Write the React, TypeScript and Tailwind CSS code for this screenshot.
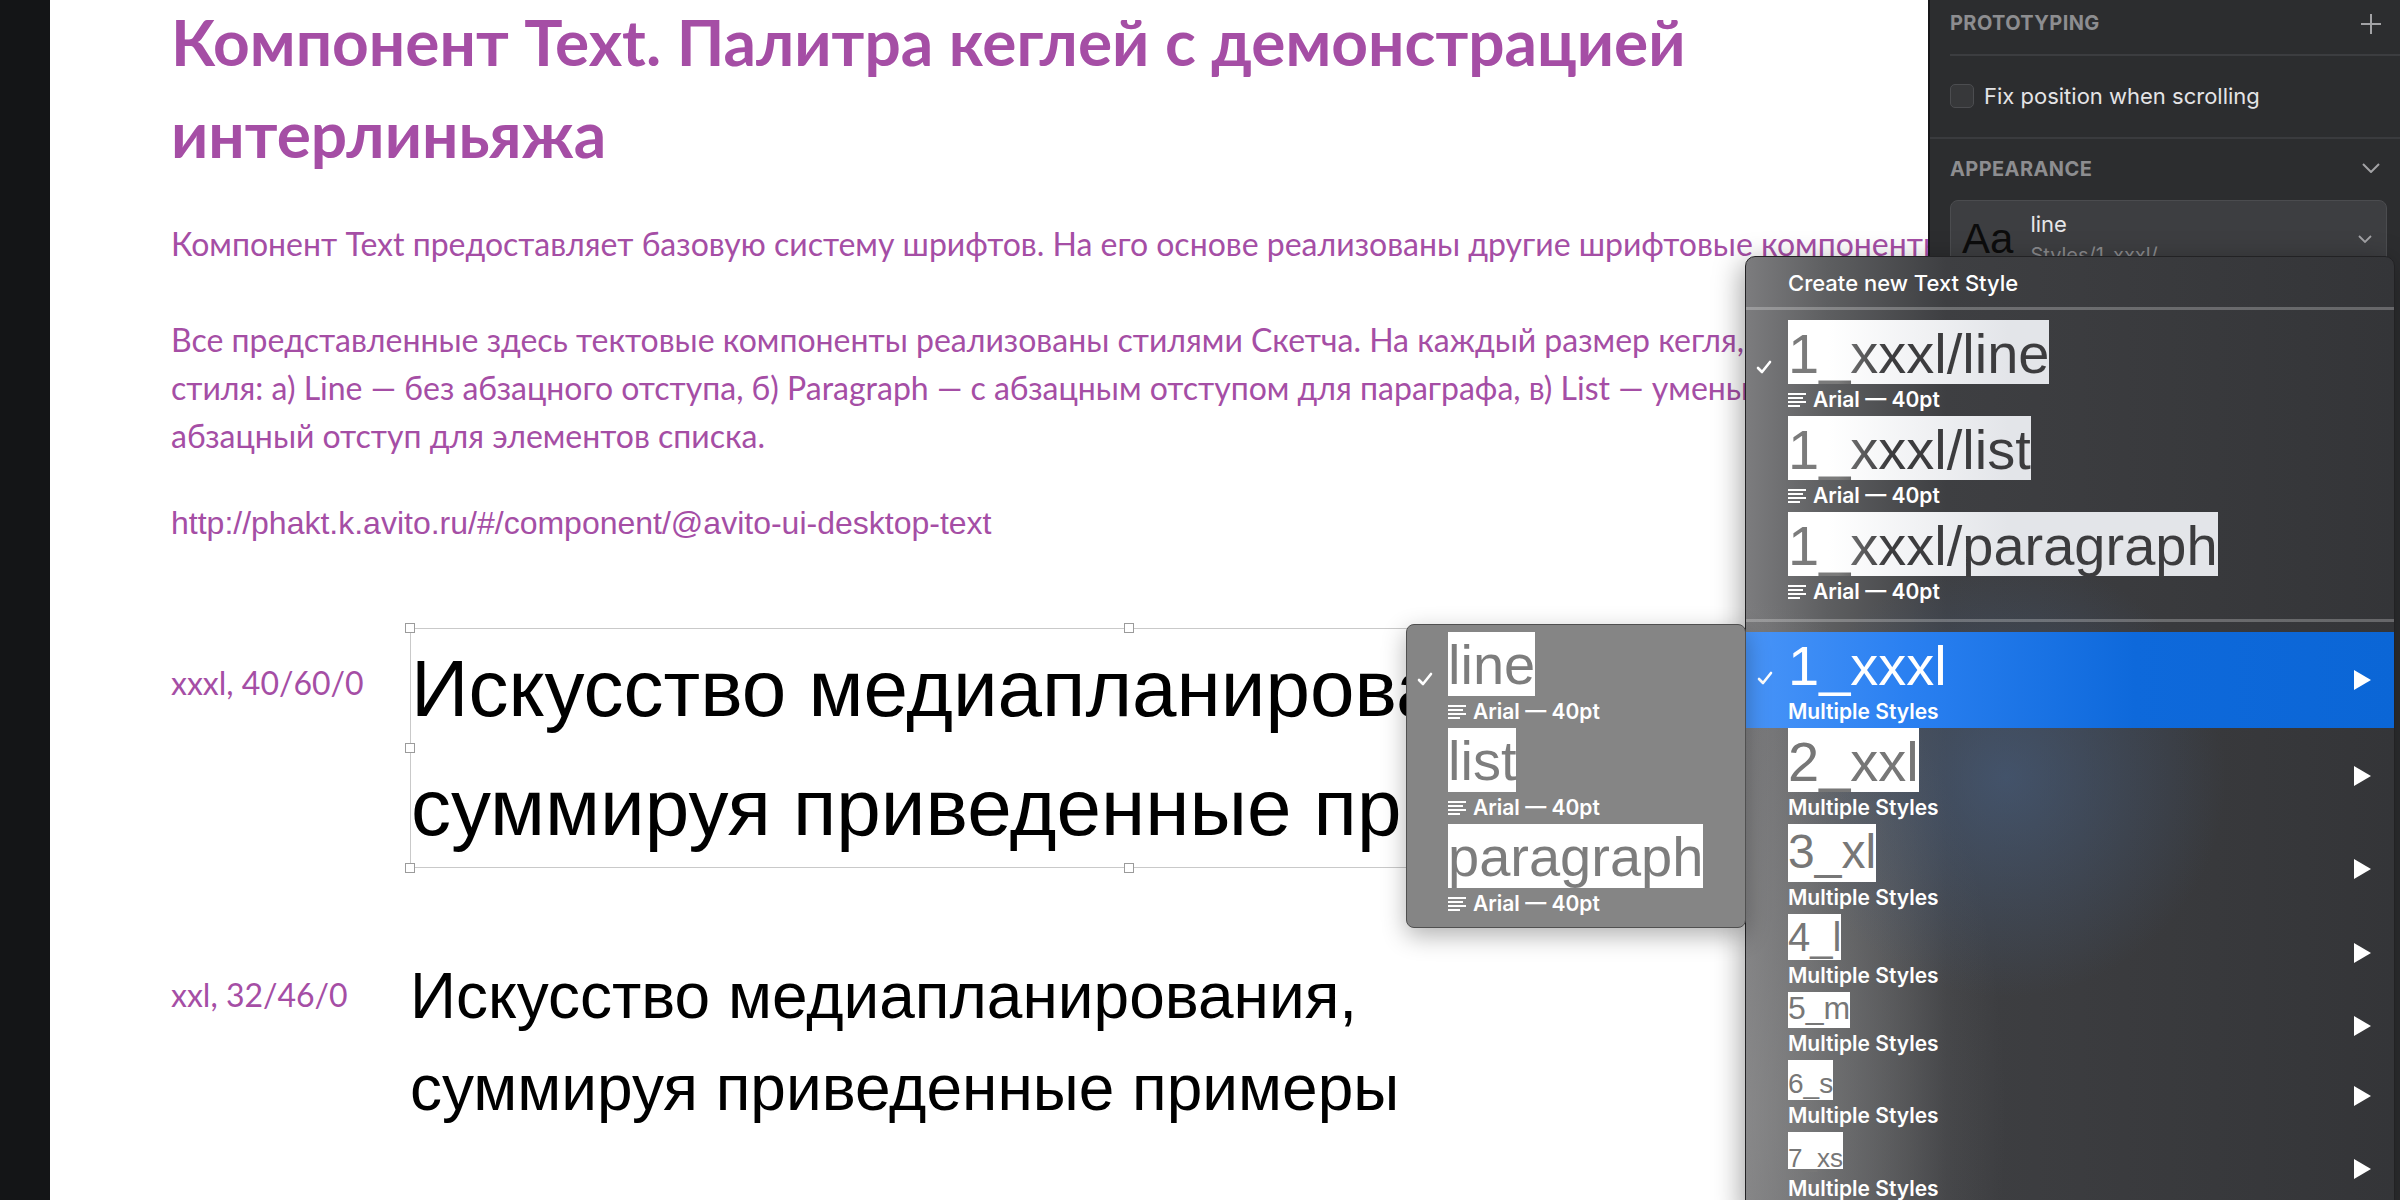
import React from "react"

type Size = { label: string; box: string }

const topStyles = ["1_xxxl/line", "1_xxxl/list", "1_xxxl/paragraph"]

const sizes: Size[] = [
  { label: "2_xxl", box: "h-[64px] pt-[6px] text-[56px]" },
  { label: "3_xl", box: "h-[58px] pt-[4px] text-[48px]" },
  { label: "4_l", box: "h-[46px] pt-[3px] text-[40px]" },
  { label: "5_m", box: "h-[36px] pt-[0px] text-[32px]" },
  { label: "6_s", box: "h-[40px] pt-[10px] text-[28px]" },
  { label: "7_xs", box: "h-[37px] pt-[13px] text-[26px]" },
]

const Check = () => (
  <svg width="16" height="14" viewBox="0 0 16 14" fill="none">
    <path d="M2 8 L6 12 L14 2" stroke="white" strokeWidth="2.6" strokeLinecap="round" strokeLinejoin="round" />
  </svg>
)

const AlignIcon = () => (
  <svg width="18" height="14" viewBox="0 0 18 14" fill="white">
    <rect x="0" y="0" width="18" height="2" />
    <rect x="0" y="4" width="15" height="2" />
    <rect x="0" y="8" width="18" height="2" />
    <rect x="0" y="12" width="12" height="2" />
  </svg>
)

const Arrow = () => (
  <svg width="17" height="20" viewBox="0 0 17 20">
    <path d="M0 0 L17 10 L0 20 Z" fill="white" />
  </svg>
)

const Handle = ({ className }: { className: string }) => (
  <span className={`absolute size-[10px] border border-[#9b9b9b] bg-white ${className}`} />
)

const Subtitle = ({ text }: { text: string }) => (
  <div className="flex h-[32px] items-center gap-[7px] text-[21px] font-semibold leading-[32px]">
    <AlignIcon />
    <span>{text}</span>
  </div>
)

const Dropdown = () => (
  <div className="absolute left-[1745px] top-[256px] h-[960px] w-[650px] overflow-hidden rounded-[10px] border border-[#222224] bg-[radial-gradient(ellipse_220px_220px_at_260px_520px,rgba(72,100,140,0.55),transparent),radial-gradient(ellipse_260px_520px_at_0px_860px,rgba(150,150,150,0.45),transparent),linear-gradient(90deg,#7c7c7e_0px,#5e5f61_80px,#3e3f42_200px,#343538_100%)] font-['Inter',sans-serif] text-white shadow-[-4px_6px_28px_rgba(0,0,0,0.35)]">
    <div className="flex h-[50px] items-center pl-[42px] pt-[2px] text-[22px] font-medium">Create new Text Style</div>
    <div className="h-[3px] bg-white/25" />

    <div className="pt-[10px]">
      {topStyles.map((name, i) => (
        <div key={name} className="flex">
          <div className="w-[42px] shrink-0 pl-[10px] pt-[40px]">{i === 0 && <Check />}</div>
          <div>
            <div className="inline-block h-[64px] bg-[linear-gradient(90deg,#ffffff_40px,#e3e5e9_220px)] pt-[6px] font-['Liberation_Sans',Arial,sans-serif] text-[56px] leading-none">
              <span className="bg-[linear-gradient(90deg,#7b7b7b_50px,#3c3c3e_100px)] bg-clip-text text-transparent">{name}</span>
            </div>
            <Subtitle text="Arial — 40pt" />
          </div>
        </div>
      ))}
    </div>

    <div className="mt-[11px] h-[3px] bg-white/25" />

    <div className="mt-[10px]">
      <div className="flex h-[96px] items-center bg-[linear-gradient(90deg,#4894f8,#2a80f1_25%,#0e69db_60%,#0b66d6)] pr-[23px]">
        <div className="w-[42px] shrink-0 self-start pl-[11px] pt-[39px]">
          <Check />
        </div>
        <div className="flex-1 self-start">
          <div className="h-[64px] pt-[6px] font-['Liberation_Sans',Arial,sans-serif] text-[56px] leading-none">1_xxxl</div>
          <div className="h-[32px] text-[21px] font-semibold leading-[32px]">Multiple Styles</div>
        </div>
        <Arrow />
      </div>

      {sizes.map((s) => (
        <div key={s.label} className="flex items-center pr-[23px]">
          <div className="flex-1 pl-[42px]">
            <div className={`inline-block bg-white font-['Liberation_Sans',Arial,sans-serif] leading-none text-[#777777] ${s.box}`}>{s.label}</div>
            <div className="h-[32px] text-[21px] font-semibold leading-[32px]">Multiple Styles</div>
          </div>
          <Arrow />
        </div>
      ))}
    </div>
  </div>
)

const Submenu = () => (
  <div className="absolute left-[1406px] top-[624px] h-[304px] w-[340px] rounded-[8px] border border-[#505050] bg-[#858585] pt-[7px] font-['Inter',sans-serif] text-white shadow-[0_8px_24px_rgba(0,0,0,0.3)]">
    {["line", "list", "paragraph"].map((name, i) => (
      <div key={name} className="flex">
        <div className="w-[41px] shrink-0 pl-[10px] pt-[40px]">{i === 0 && <Check />}</div>
        <div>
          <div className="inline-block h-[64px] bg-white pt-[5px] font-['Liberation_Sans',Arial,sans-serif] text-[56px] leading-none text-[#7d7d7d]">{name}</div>
          <Subtitle text="Arial — 40pt" />
        </div>
      </div>
    ))}
  </div>
)

const Panel = () => (
  <aside className="w-[472px] shrink-0 border-l-2 border-[#18181a] bg-[#2c2d2f] font-['Inter',sans-serif]">
    <div className="flex h-[54px] items-start justify-between pl-[20px] pr-[18px] pt-[11px]">
      <span className="text-[20px] font-bold leading-[24px] tracking-[0.02em] text-[#8d8d90]">PROTOTYPING</span>
      <svg className="mt-[2px]" width="22" height="22" viewBox="0 0 22 22" stroke="#a2a2a5" strokeWidth="2">
        <path d="M11 1 V21 M1 11 H21" />
      </svg>
    </div>
    <div className="ml-[20px] h-[2px] bg-[#3c3d40]" />
    <div className="mt-[28px] flex items-center gap-[10px] pl-[20px]">
      <span className="size-[24px] rounded-[5px] border border-[#4c4d50] bg-[#37383a]" />
      <span className="text-[22px] leading-[24px] text-[#e4e4e6]">Fix position when scrolling</span>
    </div>
    <div className="mt-[29px] h-[2px] bg-[#3a3b3e]" />
    <div className="flex items-start justify-between pl-[20px] pr-[20px] pt-[18px]">
      <span className="text-[20px] font-bold leading-[24px] tracking-[0.02em] text-[#8d8d90]">APPEARANCE</span>
      <svg className="mt-[6px]" width="18" height="10" viewBox="0 0 18 10" fill="none" stroke="#a2a2a5" strokeWidth="2">
        <path d="M1 1 L9 9 L17 1" />
      </svg>
    </div>
    <div className="ml-[20px] mr-[13px] mt-[19px] flex h-[96px] items-start rounded-[8px] border border-[#4b4c4f] bg-[#3d3e41] pl-[11px] pr-[14px]">
      <span className="mt-[17px] font-['Liberation_Sans',Arial,sans-serif] text-[42px] leading-none text-[#0c0c0c]">Aa</span>
      <div className="ml-[17px] mt-[10px]">
        <div className="text-[22px] leading-[26px] text-[#e6e6e8]">line</div>
        <div className="mt-[6px] text-[20px] leading-[24px] text-[#8a8a8d]">Styles/1_xxxl/</div>
      </div>
      <svg className="ml-auto mt-[34px]" width="14" height="8" viewBox="0 0 14 8" fill="none" stroke="#a2a2a5" strokeWidth="1.8">
        <path d="M1 1 L7 7 L13 1" />
      </svg>
    </div>
  </aside>
)

export default function App() {
  return (
    <div className="relative flex h-[1200px] w-[2400px] overflow-hidden bg-white font-['Lato',sans-serif]">
      <div className="w-[50px] shrink-0 bg-[#141517]" />

      <main className="min-w-0 flex-1 overflow-hidden pl-[121px] text-[#a54ea5]">
        <h1 className="-mt-[4px] whitespace-nowrap text-[64px] font-bold leading-[92px]">
          Компонент Text. Палитра кеглей с демонстрацией
          <br />
          интерлиньяжа
        </h1>
        <p className="mt-[40px] whitespace-nowrap text-[32px] leading-[48px]">
          Компонент Text предоставляет базовую систему шрифтов. На его основе реализованы другие шрифтовые компоненты.
        </p>
        <p className="mt-[48px] whitespace-nowrap text-[32px] leading-[48px]">
          Все представленные здесь тектовые компоненты реализованы стилями Скетча. На каждый размер кегля, существует три
          <br />
          стиля: а) Line — без абзацного отступа, б) Paragraph — с абзацным отступом для параграфа, в) List — уменьшенный
          <br />
          абзацный отступ для элементов списка.
        </p>
        <p className="mt-[39px] whitespace-nowrap font-['Liberation_Sans',Arial,sans-serif] text-[32px] leading-[48px]">
          http://phakt.k.avito.ru/#/component/@avito-ui-desktop-text
        </p>

        <div className="mt-[81px] flex">
          <div className="w-[239px] shrink-0 pt-[31px] text-[32px] leading-[48px]">xxxl, 40/60/0</div>
          <div className="relative h-[240px] w-[1438px] shrink-0 whitespace-nowrap border border-[#c9c9c9] font-['Liberation_Sans',Arial,sans-serif] text-[80px] leading-[119px] text-black">
            Искусство медиапланирования,
            <br />
            суммируя приведенные примеры
            <Handle className="-left-[6px] -top-[6px]" />
            <Handle className="left-[713px] -top-[6px]" />
            <Handle className="-left-[6px] top-[114px]" />
            <Handle className="-left-[6px] -bottom-[6px]" />
            <Handle className="left-[713px] -bottom-[6px]" />
          </div>
        </div>

        <div className="mt-[82px] flex">
          <div className="w-[239px] shrink-0 pt-[21px] text-[32px] leading-[48px]">xxl, 32/46/0</div>
          <div className="whitespace-nowrap font-['Liberation_Sans',Arial,sans-serif] text-[64px] leading-[92px] text-black">
            Искусство медиапланирования,
            <br />
            суммируя приведенные примеры
          </div>
        </div>
      </main>

      <Panel />
      <Dropdown />
      <Submenu />
    </div>
  )
}
